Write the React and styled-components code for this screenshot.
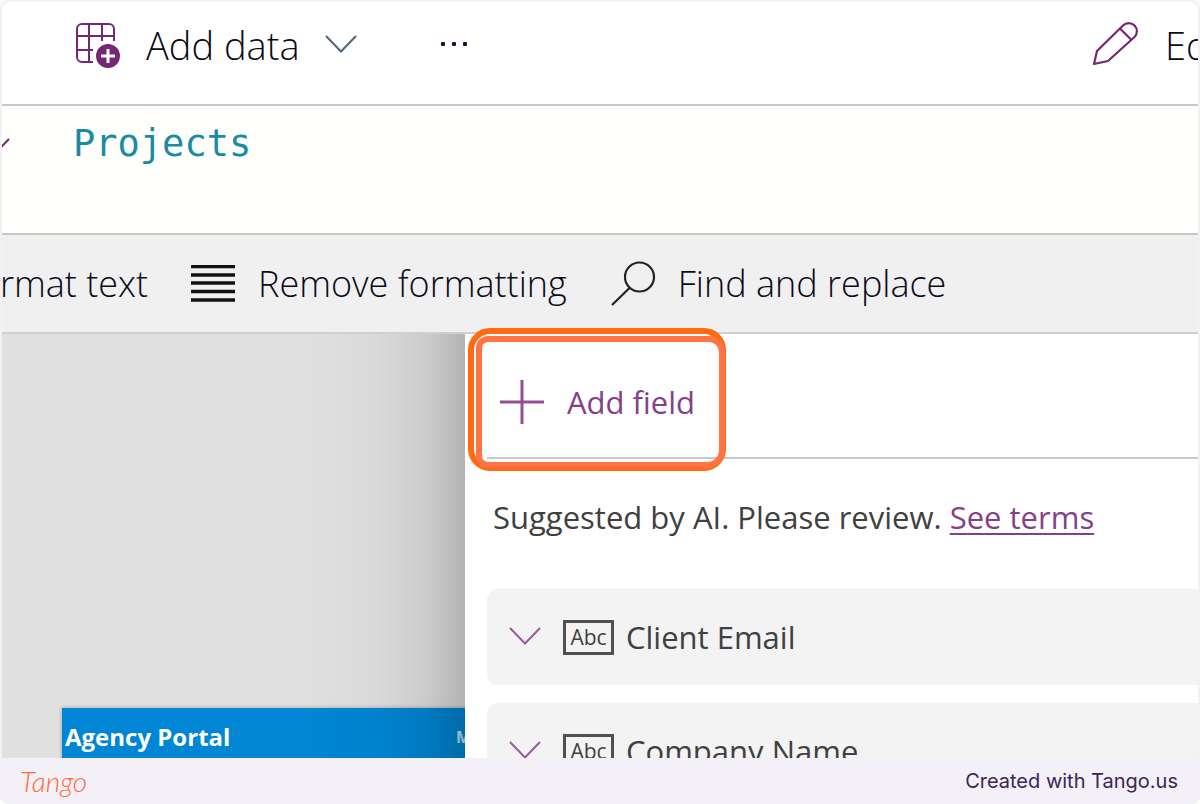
import React from 'react';
import styled, { createGlobalStyle } from 'styled-components';

const Colors = {
  frame: '#f3f1f7',
  purple: '#742774',
  link: '#84408a',
  line: '#c8c8c8',
  teal: '#1a8ba3',
  text: '#404040',
};

const GlobalStyle = createGlobalStyle`
  * { box-sizing: border-box; }
  body { margin: 0; background: #fff; }
  button { border: 0; padding: 0; background: none; cursor: pointer; }
  svg { display: block; flex: none; fill: none; }
`;

const Frame = styled.div`
  display: flex;
  flex-direction: column;
  height: 100vh;
  padding: 2px 2px 0;
  border-radius: 8px;
  background: ${Colors.frame};
  font-family: 'Open Sans', 'Noto Sans', sans-serif;
`;

const Screen = styled.main`
  display: flex;
  flex: 1;
  flex-direction: column;
  min-height: 0;
  overflow: hidden;
  border-radius: 8px 8px 0 0;
  background: #fff;
`;

const CommandBar = styled.header`
  display: flex;
  flex: none;
  align-items: center;
  height: 104px;
  padding-bottom: 16px;
  border-bottom: 2px solid ${Colors.line};
`;

const Stub = styled.div`
  display: flex;
  flex: none;
  justify-content: flex-end;
  width: ${p => p.$width}px;
  overflow: hidden;
`;

const BarButton = styled.button`
  display: flex;
  flex: none;
  align-items: center;
  gap: ${p => p.$gap}px;
  margin-left: ${p => p.$left}px;
  font: ${p => p.$weight || 300} ${p => p.$size}px/48px 'Open Sans', 'Noto Sans', sans-serif;
  color: ${p => p.$color || '#0c0a18'};
  white-space: nowrap;
`;

const EditSlot = styled.div`
  width: 106px;
  margin-left: auto;
`;

const FormulaBar = styled.div`
  display: flex;
  flex: none;
  align-items: flex-start;
  height: 129px;
  padding-top: 14px;
  border-bottom: 2px solid ${Colors.line};
  background: #fffffc;
`;

const FormulaToggle = styled.button`
  display: flex;
  justify-content: flex-end;
  align-items: center;
  width: 8px;
  height: 56px;
  overflow: hidden;
`;

const FormulaInput = styled.input`
  flex: 1;
  min-width: 0;
  height: 48px;
  margin-left: 63px;
  padding: 0;
  border: 0;
  outline: 0;
  background: none;
  font: 400 37px/48px 'DejaVu Sans Mono', monospace;
  color: ${Colors.teal};
`;

const FormatBar = styled.div`
  display: flex;
  flex: none;
  align-items: center;
  height: 99px;
  border-bottom: 2px solid #cfcfcf;
  background: #f0f0f0;
`;

const Workspace = styled.div`
  display: flex;
  flex: 1;
  min-height: 0;
`;

const Canvas = styled.section`
  position: relative;
  flex: none;
  width: 463px;
  padding: 374px 0 0 60px;
  overflow: hidden;
  background: #e0e0e0;

  &::after {
    content: '';
    position: absolute;
    inset: 0 0 0 auto;
    width: 160px;
    background: linear-gradient(90deg, transparent, rgba(0, 0, 0, 0.03) 45%, rgba(0, 0, 0, 0.09) 75%, rgba(0, 0, 0, 0.2));
  }
`;

const AppHeader = styled.div`
  display: flex;
  align-items: center;
  justify-content: space-between;
  height: 58px;
  padding-left: 3px;
  background: #0086d4;
  box-shadow: 0 0 4px rgba(0, 0, 0, 0.3);
  color: #fff;
  white-space: nowrap;
`;

const AppTitle = styled.h1`
  margin: 0;
  font-size: 24px;
  font-weight: 700;
  line-height: 32px;
`;

const AppUser = styled.span`
  width: 9px;
  overflow: hidden;
  font-size: 16px;
  font-weight: 700;
  line-height: 24px;
  opacity: 0.75;
`;

const Panel = styled.section`
  position: relative;
  flex: 1;
  min-width: 0;
  padding-left: 22px;
  background: #fff;
`;

const PanelHeader = styled.div`
  display: flex;
  align-items: center;
  height: 125px;
  padding-top: 12px;
  border-bottom: 2px solid ${Colors.line};
`;

const Highlight = styled.div`
  position: absolute;
  top: -6px;
  left: 3px;
  width: 258px;
  height: 143px;
  border: 6px solid #ff6a12;
  border-radius: 22px;
  pointer-events: none;

  &::after {
    content: '';
    position: absolute;
    inset: 2px -5px -3px 2px;
    border: 6px solid #ff7442;
    border-radius: 12px 16px 18px 12px;
  }
`;

const Notice = styled.p`
  margin: 0;
  padding: 33px 0 47px 6px;
  font-size: 31px;
  line-height: 50px;
  color: ${Colors.text};
  white-space: nowrap;

  a { color: ${Colors.link}; text-underline-offset: 4px; text-decoration-thickness: 2px; }
`;

const FieldList = styled.div`
  display: flex;
  flex-direction: column;
  gap: 18px;
`;

const FieldRow = styled.button`
  display: flex;
  align-items: center;
  height: 96px;
  padding-left: 22px;
  border-radius: 10px 0 0 10px;
  background: #f3f3f3;
  font: 400 31px/48px 'Open Sans', 'Noto Sans', sans-serif;
  color: ${Colors.text};
  white-space: nowrap;
`;

const TypeBadge = styled.span`
  width: 51px;
  height: 35px;
  margin: 0 12px 0 22px;
  border: 3px solid #505050;
  font-size: 21px;
  line-height: 28px;
  text-align: center;
`;

const Footer = styled.footer`
  display: flex;
  flex: none;
  align-items: center;
  justify-content: space-between;
  height: 46px;
  padding: 0 20px 0 18px;
`;

const Logo = styled.a`
  font: italic 300 28px/40px Lato, sans-serif;
  color: #ff6c37;
  text-decoration: none;
`;

const Credit = styled.span`
  font: 400 20px/32px Inter, sans-serif;
  color: #3b2654;
`;

const Chevron = ({ color = Colors.purple }) =>
  <svg width="32" height="20" viewBox="0 0 32 20" stroke={color} strokeWidth="2">
    <path d="M1 1 16 16.500 31 1" />
  </svg>;

const AddDataIcon = () =>
  <svg width="46" height="46" viewBox="0 0 46 46" stroke={Colors.purple} strokeWidth="2">
    <path d="M18 40H7a5 5 0 0 1-5-5V7a5 5 0 0 1 5-5h27a5 5 0 0 1 5 5v12M14 2v38M27 2v17M2 14h37M2 28h16" />
    <circle cx="33" cy="34" r="12" fill={Colors.purple} stroke="none" />
    <path d="M33 27v14M26 34h14" stroke="#fff" strokeWidth="3" />
  </svg>;

const MoreIcon = () =>
  <svg width="30" height="8" viewBox="0 0 30 8">
    <rect x="1" y="1" width="4" height="4" rx="1" fill="#2b0a35" />
    <rect x="12" y="1" width="4" height="4" rx="1" fill="#2b0a35" />
    <rect x="23" y="1" width="4" height="4" rx="1" fill="#2b0a35" />
  </svg>;

const PencilIcon = () =>
  <svg width="46" height="46" viewBox="0 0 46 46" stroke={Colors.purple} strokeWidth="2.200" strokeLinejoin="round">
    <path d="M2 42 5 29 31 3.500a8 8 0 0 1 11.500 11.500L16 39ZM28 6.500 39 17.500" />
  </svg>;

const LinesIcon = () =>
  <svg width="44" height="38" viewBox="0 0 44 38" stroke="#111" strokeWidth="3.500">
    <path d="M0 1.500h44M0 10h44M0 18h44M0 26.500h44M0 35h44" />
  </svg>;

const SearchIcon = () =>
  <svg width="46" height="46" viewBox="0 0 46 46" stroke="#222" strokeWidth="2.200">
    <circle cx="28.500" cy="16" r="14.500" />
    <path d="M18.500 27 1 44" />
  </svg>;

const PlusIcon = () =>
  <svg width="44" height="44" viewBox="0 0 44 44" stroke="#925092" strokeWidth="3">
    <path d="M22 0v44M0 22h44" />
  </svg>;

const fields = ['Client Email', 'Company Name'];

const App = () =>
  <Frame>
    <GlobalStyle />
    <Screen>
      <CommandBar>
        <BarButton $left={73} $gap={25} $size={38}>
          <AddDataIcon />
          Add data
          <Chevron color="#53657c" />
        </BarButton>
        <BarButton $left={83} aria-label="More commands">
          <MoreIcon />
        </BarButton>
        <EditSlot>
          <BarButton $left={0} $gap={27} $size={38}>
            <PencilIcon />
            Edit
          </BarButton>
        </EditSlot>
      </CommandBar>
      <FormulaBar>
        <FormulaToggle aria-label="Expand formula bar">
          <Chevron />
        </FormulaToggle>
        <FormulaInput aria-label="Formula" defaultValue="Projects" spellCheck={false} />
      </FormulaBar>
      <FormatBar>
        <Stub $width={146}>
          <BarButton $left={0} $size={36}>Format text</BarButton>
        </Stub>
        <BarButton $left={43} $gap={23} $size={36}>
          <LinesIcon />
          Remove formatting
        </BarButton>
        <BarButton $left={44} $gap={21} $size={36}>
          <SearchIcon />
          Find and replace
        </BarButton>
      </FormatBar>
      <Workspace>
        <Canvas>
          <AppHeader>
            <AppTitle>Agency Portal</AppTitle>
            <AppUser>M</AppUser>
          </AppHeader>
        </Canvas>
        <Panel>
          <PanelHeader>
            <BarButton $left={13} $gap={23} $size={31} $weight={400} $color={Colors.link}>
              <PlusIcon />
              Add field
            </BarButton>
          </PanelHeader>
          <Highlight />
          <Notice>
            Suggested by AI. Please review. <a href="#terms">See terms</a>
          </Notice>
          <FieldList>
            {fields.map(name =>
              <FieldRow key={name}>
                <Chevron color="#a0569f" />
                <TypeBadge>Abc</TypeBadge>
                {name}
              </FieldRow>
            )}
          </FieldList>
        </Panel>
      </Workspace>
    </Screen>
    <Footer>
      <Logo href="#tango">Tango</Logo>
      <Credit>Created with Tango.us</Credit>
    </Footer>
  </Frame>;

export default App;
